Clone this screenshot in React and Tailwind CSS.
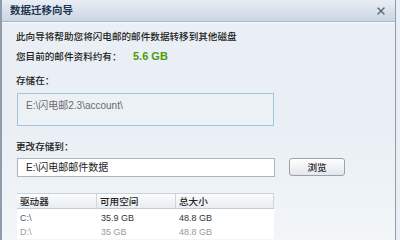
import { X } from "lucide-react";

const font = { fontFamily: '"Noto Sans CJK SC", "Liberation Sans", sans-serif' };
const latin = { fontFamily: '"Liberation Sans", "Noto Sans CJK SC", sans-serif' };

export default function App() {
  return (
    <div className="w-[400px] h-[240px] overflow-hidden bg-[#e9eff4] text-[9.6px] text-[#222] font-medium" style={font}>
      <div className="h-[240px] border-l-2 border-r border-[#8f9caa] mr-[4px] flex flex-col">
        <div className="h-[22px] shrink-0 flex items-center justify-between pl-[8px] pr-[8px] bg-gradient-to-b from-[#e8eef4] to-[#cad6e2] border-b border-[#a9b8c6]">
          <span className="font-bold text-[10.5px] text-[#1f3450] leading-none">数据迁移向导</span>
          <X className="w-[12px] h-[12px] text-[#556070]" strokeWidth={2.5} />
        </div>
        <div className="h-[1px] bg-white/70" />
        <div className="flex-1 pl-[14px] pt-[3px] bg-gradient-to-b from-[#e9eff4] via-[#e9eff4] to-[#f2f6f9]">
          <div className="h-[20px] leading-[20px]">此向导将帮助您将闪电邮的邮件数据转移到其他磁盘</div>
          <div className="h-[20px] leading-[20px] flex">
            <span className="w-[117px]">您目前的邮件资料约有：</span>
            <span className="font-bold text-[#4f9a0c] text-[11px]" style={latin}>5.6 GB</span>
          </div>
          <div className="h-[22px] leading-[22px] mt-[3px]">存储在：</div>
          <div className="w-[257px] h-[33px] mt-[2px] ml-[1px] border border-[#a8c3dc] bg-[#ecf1f5] pl-[8px] pt-[4px] text-[#6b6b6b] text-[10px] font-normal" style={latin}>
            E:\闪电邮2.3\account\
          </div>
          <div className="h-[20px] leading-[20px] mt-[10px]">更改存储到：</div>
          <div className="flex items-start mt-[2px]">
            <div className="w-[258px] ml-[1px] h-[19px] border border-[#aab6c2] bg-white pl-[8px] leading-[17px] text-[#222] text-[10px] font-normal" style={latin}>
              E:\闪电邮邮件数据
            </div>
            <button className="ml-[14px] w-[56px] h-[18px] rounded-[3px] border border-[#9aa3ac] bg-gradient-to-b from-white to-[#e3e7eb] text-[9.6px] leading-[16px] text-[#222]">
              浏览
            </button>
          </div>
          <div className="w-[257px] ml-[1px] mt-[16px] bg-white border-t border-[#c9d2da]">
            <div className="flex h-[15px] leading-[15px] bg-gradient-to-b from-[#fbfcfd] to-[#e8ecf0] border-b border-[#c3ccd4] text-[#222]">
              <div className="w-[80px] pl-[3px] border-r border-[#cfd6dd]">驱动器</div>
              <div className="w-[79px] pl-[3px] border-r border-[#cfd6dd]">可用空间</div>
              <div className="flex-1 pl-[3px] border-r border-[#cfd6dd]">总大小</div>
            </div>
            <div className="flex h-[14px] leading-[14px] text-[9px] text-[#4d5966] mt-[2px] font-normal" style={latin}>
              <div className="w-[80px] pl-[3px]">C:\</div>
              <div className="w-[79px] pl-[4px] text-[#333]">35.9 GB</div>
              <div className="flex-1 pl-[3px] text-[#333]">48.8 GB</div>
            </div>
            <div className="flex h-[14px] leading-[14px] text-[9px] text-[#9a9a9a] font-normal" style={latin}>
              <div className="w-[80px] pl-[3px]">D:\</div>
              <div className="w-[79px] pl-[4px]">35 GB</div>
              <div className="flex-1 pl-[3px]">48.8 GB</div>
            </div>
          </div>
        </div>
      </div>
    </div>
  );
}
